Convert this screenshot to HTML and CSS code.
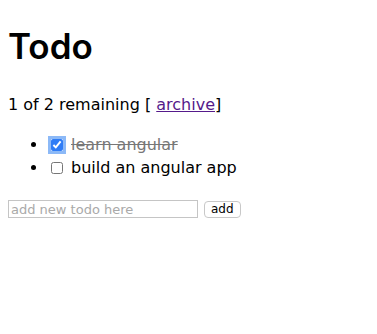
FILE: index.html
```html
<!DOCTYPE html>
<html>
<head>
<meta charset="utf-8">
<link rel="stylesheet" href="styles.css">
</head>
<body>
<h2 class="title">Todo</h2>
<div class="app">
  <span class="remaining">1 of 2 remaining</span>
  [ <a href="#" class="archive">archive</a>]
  <ul class="unstyled">
    <li><input type="checkbox" class="check focused" checked><span class="done-true">learn angular</span></li>
    <li><input type="checkbox" class="check"><span class="done-false">build an angular app</span></li>
  </ul>
  <form class="add-form">
    <input type="text" class="new-todo" size="30" placeholder="add new todo here">
    <input class="btn-add" type="submit" value="add">
  </form>
</div>
</body>
</html>
```
FILE: styles.css
```css
body {
  margin: 8px;
  font-family: "DejaVu Sans", Arial, sans-serif;
  font-size: 16px;
  color: #000;
}
.title {
  font-family: Inter, "Liberation Sans", Arial, sans-serif;
  font-size: 35px;
  font-weight: 600;
  margin: 16px 0 27px;
  line-height: 44px;
}
.app {
  line-height: 20px;
}
.archive {
  color: #551a8b;
}
.unstyled {
  margin: 18px 0 22px;
  padding-left: 40px;
  line-height: 23px;
}
.check {
  width: 12px;
  height: 12px;
  margin: 0 8px 0 3px;
  vertical-align: -1px;
  accent-color: #2f7cf6;
}
.focused {
  border-radius: 3px;
  box-shadow: 0 0 0 3px #8cb9f7;
  outline: none;
}
.done-true {
  text-decoration: line-through;
  color: #777;
}
.add-form {
  margin: -1px 0 0;
  display: flex;
  align-items: center;
  gap: 6px;
}
.new-todo {
  width: 184px;
  height: 16px;
  padding: 0 2px;
  border: 1px solid #c5c5c5;
  font-family: "DejaVu Sans", Arial, sans-serif;
  font-size: 13px;
  margin: 0;
}
.new-todo::placeholder {
  color: #a9a9a9;
}
.btn-add {
  font-family: "DejaVu Sans", Arial, sans-serif;
  font-size: 12px;
  background: #fff;
  border: 1px solid #c8c8c8;
  border-radius: 4px;
  height: 17px;
  padding: 0 6px;
  margin: 0;
  color: #000;
}
```
